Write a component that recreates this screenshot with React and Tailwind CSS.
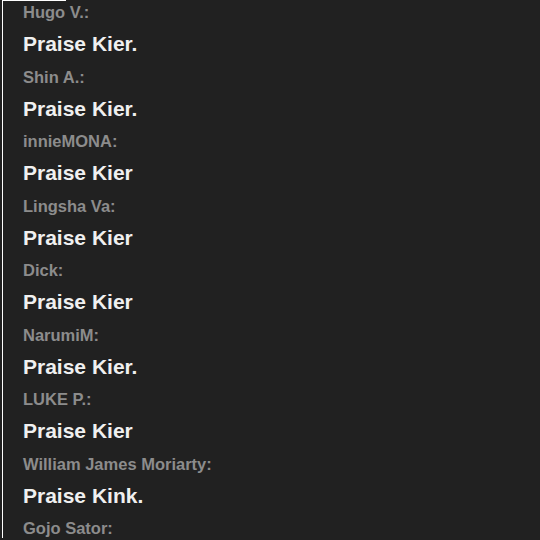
const messages = [
  { name: 'Hugo V.:', text: 'Praise Kier.' },
  { name: 'Shin A.:', text: 'Praise Kier.' },
  { name: 'innieMONA:', text: 'Praise Kier' },
  { name: 'Lingsha Va:', text: 'Praise Kier' },
  { name: 'Dick:', text: 'Praise Kier' },
  { name: 'NarumiM:', text: 'Praise Kier.' },
  { name: 'LUKE P.:', text: 'Praise Kier' },
  { name: 'William James Moriarty:', text: 'Praise Kink.' },
  { name: 'Gojo Sator:', text: 'Praise Kier.' },
];

export default function App() {
  return (
    <div
      className="relative w-[540px] h-[540px] overflow-hidden bg-[#212121]"
      style={{ fontFamily: '"Liberation Sans", Arial, sans-serif' }}
    >
      {/* frame edge */}
      <div className="absolute left-[2px] top-0 w-[64px] h-px bg-white" />
      <div className="ml-[2px] h-full border-l border-white pl-[20px] -mt-[2px]">
        {messages.map((m, i) => (
          <div key={i} className="flex flex-col">
            <div className="h-[28px] leading-[28px] text-[16.5px] font-bold text-[#8c8c8c]">
              {m.name}
            </div>
            <div className="h-[36.5px] leading-[36.5px] text-[21px] font-bold text-[#f0f0f0]">
              {m.text}
            </div>
          </div>
        ))}
      </div>
    </div>
  );
}
